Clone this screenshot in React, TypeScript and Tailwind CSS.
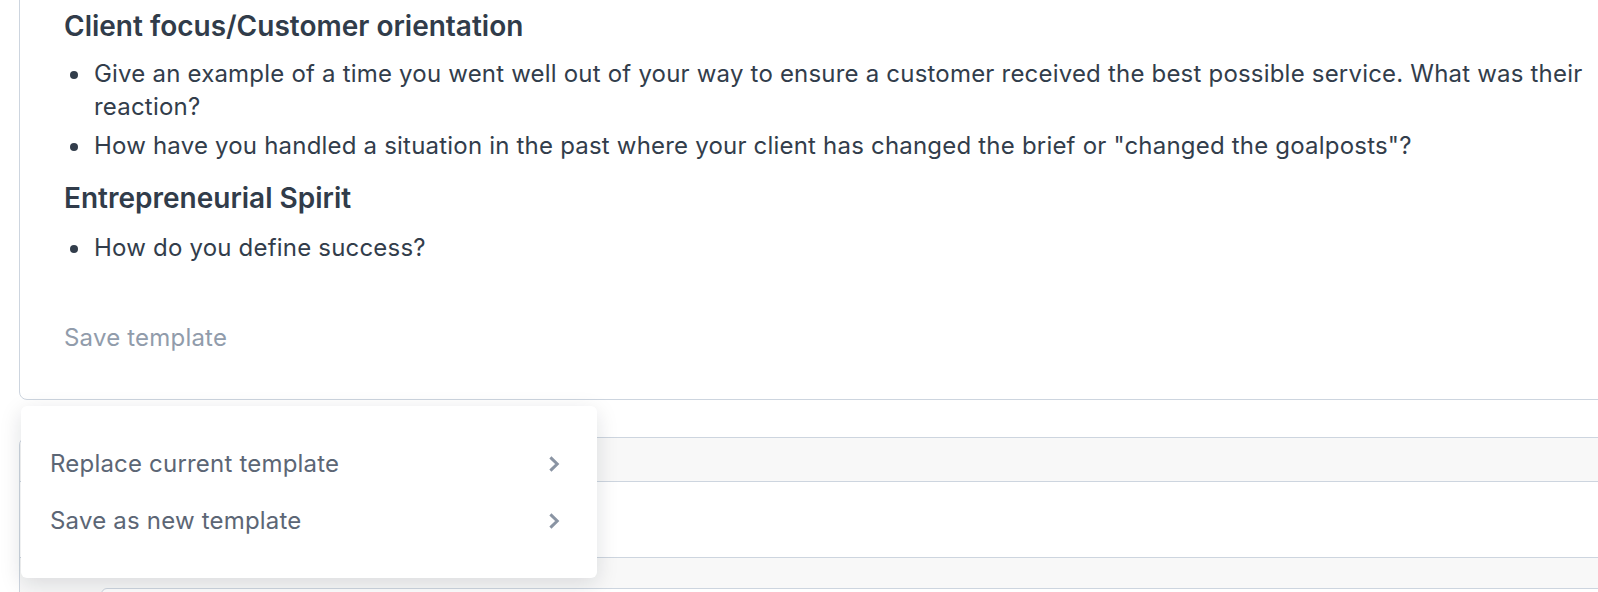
import React from 'react'

const sections = [
    {
        title: 'Client focus/Customer orientation',
        questions: [
            'Give an example of a time you went well out of your way to ensure a customer received the best possible service. What was their reaction?',
            'How have you handled a situation in the past where your client has changed the brief or "changed the goalposts"?',
        ],
    },
    {
        title: 'Entrepreneurial Spirit',
        questions: ['How do you define success?'],
    },
]

const menuItems = ['Replace current template', 'Save as new template']

function Chevron() {
    return (
        <svg width="12" height="18" viewBox="0 0 12 18" fill="none" className="shrink-0">
            <path d="M2.4 2.4 L9.2 9 L2.4 15.6" stroke="#8a94a3" strokeWidth="3" strokeLinejoin="miter" />
        </svg>
    )
}

export default function App() {
    return (
        <div
            className="relative w-[1598px] h-[592px] overflow-hidden bg-white text-[#323d4b]"
            style={{ fontFamily: 'Inter, "Noto Sans", sans-serif' }}
        >
            <div className="w-[1700px] pl-[19px]">
                {/* Template card */}
                <div className="-mt-[10px] w-[1650px] border border-[#cdd5df] rounded-lg pt-[17px] pb-[44px] px-[44px]">
                    {sections.map((section, i) => (
                        <div key={section.title} className={i > 0 ? 'mt-[17px]' : ''}>
                            <h3 className="text-[28px] leading-9 font-semibold text-[#313c4a]">{section.title}</h3>
                            <ul className={`${i > 0 ? 'mt-[16px]' : 'mt-[14px]'} list-disc pl-7 space-y-[7px] text-[24px] leading-[32.5px] tracking-[0.2px]`}>
                                {section.questions.map((q) => (
                                    <li key={q} className="pl-0.5">{q}</li>
                                ))}
                            </ul>
                        </div>
                    ))}
                    <div className="mt-[58px] text-[24px] leading-[32.5px] tracking-[0.2px] text-[#919cab]">Save template</div>
                </div>

                {/* Next card */}
                <div className="mt-[37px] w-[1650px] border border-[#cdd5df] rounded-t-lg overflow-hidden">
                    <div className="h-[43px] bg-[#f8f8f8]" />
                    <div className="h-[76px] border-t border-[#cdd5df] bg-white" />
                    <div className="h-[60px] border-t border-[#cdd5df] bg-[#f8f8f8] pt-[30px] pl-[81px]">
                        <div className="h-[40px] border border-[#cdd5df] rounded-md bg-white" />
                    </div>
                </div>
            </div>

            {/* Save menu */}
            <div className="absolute left-[21px] top-[406px] w-[576px] rounded-md bg-white py-[29px] shadow-[0_6px_22px_rgba(15,23,42,0.13)]">
                {menuItems.map((item) => (
                    <div key={item} className="flex h-[57px] items-center justify-between pl-[29px] pr-[37px] text-[24px] tracking-[0.2px] text-[#5c6675]">
                        <span>{item}</span>
                        <Chevron />
                    </div>
                ))}
            </div>
        </div>
    )
}
